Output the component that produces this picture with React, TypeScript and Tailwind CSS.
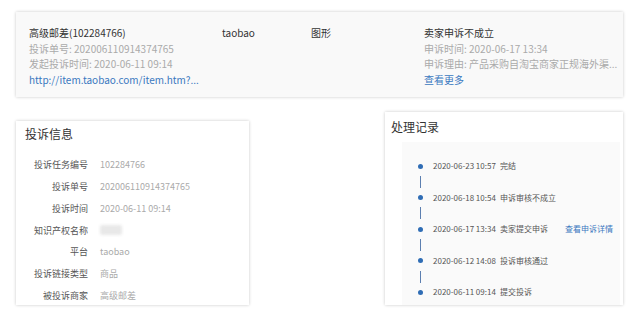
import React from "react";

const font = { fontFamily: '"Noto Sans CJK SC", "Noto Sans", sans-serif' };

const infoRows: [string, string][] = [
  ["投诉任务编号", "102284766"],
  ["投诉单号", "202006110914374765"],
  ["投诉时间", "2020-06-11 09:14"],
  ["知识产权名称", ""],
  ["平台", "taobao"],
  ["投诉链接类型", "商品"],
  ["被投诉商家", "高级邮差"],
];

const records: [string, string, boolean][] = [
  ["2020-06-23 10:57", "完结", false],
  ["2020-06-18 10:54", "申诉审核不成立", false],
  ["2020-06-17 13:34", "卖家提交申诉", true],
  ["2020-06-12 14:08", "投诉审核通过", false],
  ["2020-06-11 09:14", "提交投诉", false],
];

export default function App() {
  return (
    <div className="w-[640px] h-[320px] bg-white overflow-hidden relative" style={font}>
      <div className="ml-[16px] mt-[12px] w-[607px] h-[85px] bg-[#f9f9f9] shadow-[0_0_3px_rgba(0,0,0,0.22)] pl-[13px] pt-[13px] flex text-[10px] leading-[15.7px]">
        <div className="w-[193px] flex flex-col">
          <span className="text-[#333]">高级邮差(102284766)</span>
          <span className="text-[#aaa]">投诉单号: 202006110914374765</span>
          <span className="text-[#aaa]">发起投诉时间: 2020-06-11 09:14</span>
          <span className="text-[#3a78c0]">http://item.taobao.com/item.htm?...</span>
        </div>
        <div className="w-[89px] text-[#333]">taobao</div>
        <div className="w-[113px] text-[#333]">图形</div>
        <div className="flex flex-col">
          <span className="text-[#333]">卖家申诉不成立</span>
          <span className="text-[#aaa]">申诉时间: 2020-06-17 13:34</span>
          <span className="text-[#aaa]">申诉理由: 产品采购自淘宝商家正规海外渠...</span>
          <span className="text-[#3a78c0]">查看更多</span>
        </div>
      </div>

      <div className="flex items-start justify-between ml-[16px] w-[607px] mt-[15px]">
        <div className="mt-[9px] w-[233px] h-[184px] bg-white shadow-[0_0_3px_rgba(0,0,0,0.22)] pt-[4px]">
          <div className="pl-[9px] text-[12px] leading-[17px] text-[#333]">投诉信息</div>
          <div className="mt-[12px] flex flex-col">
            {infoRows.map(([k, v]) => (
              <div key={k} className="flex items-center h-[21.8px] text-[9px]">
                <span className="w-[72px] text-right text-[#555]">{k}</span>
                {k === "知识产权名称" ? (
                  <span className="ml-[12px] w-[22px] h-[10px] bg-[#e8e8e8] rounded-[2px] blur-[1.5px]" />
                ) : (
                  <span className="ml-[12px] text-[#aaa]">{v}</span>
                )}
              </div>
            ))}
          </div>
        </div>

        <div className="w-[238px] h-[193px] bg-white shadow-[0_0_3px_rgba(0,0,0,0.22)] flex flex-col">
          <div className="pl-[6px] pt-[6px] text-[12px] leading-[17px] text-[#333]">处理记录</div>
          <div className="ml-[17px] mr-[3px] mt-[7px] flex-1 bg-[#fafafa] pt-[18px] pl-[16px]">
            {records.map(([t, s, link], i) => (
              <div key={t}>
                <div className="flex items-center h-[12px] text-[8px] whitespace-nowrap">
                  <span className="w-[5px] h-[5px] rounded-full bg-[#2f6db5] shrink-0" />
                  <span className="ml-[10px] w-[67px] shrink-0 text-[#555]">{t}</span>
                  <span className="text-[#555] w-[65px] shrink-0">{s}</span>
                  {link && <span className="text-[#3a78c0]">查看申诉详情</span>}
                </div>
                {i < records.length - 1 && (
                  <div className="h-[19.6px] flex items-center">
                    <div className="ml-[2px] w-px h-[12px] bg-[#5c7fb0]" />
                  </div>
                )}
              </div>
            ))}
          </div>
        </div>
      </div>
    </div>
  );
}
